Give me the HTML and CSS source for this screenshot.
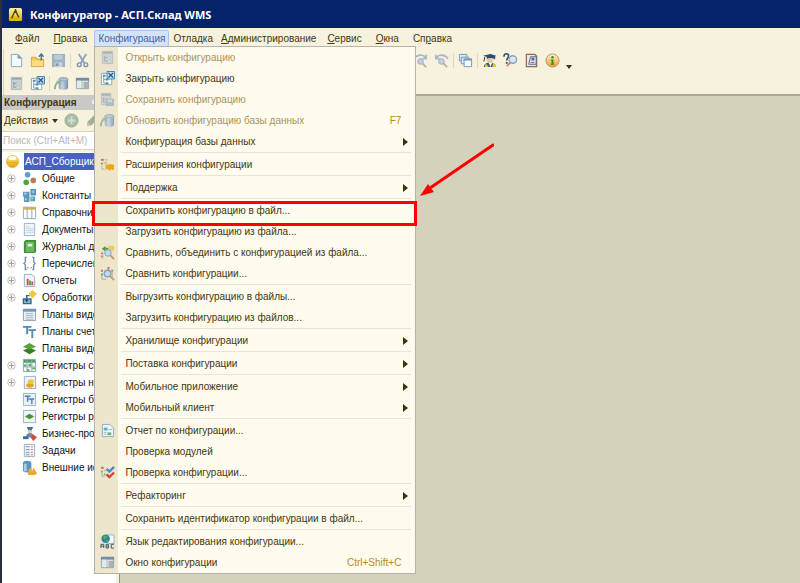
FILE: index.html
```html
<!DOCTYPE html>
<html lang="ru">
<head>
  <meta charset="UTF-8">
  <meta name="viewport" content="width=device-width, initial-scale=1.0">
  <title>Конфигуратор - АСП.Склад WMS</title>
  <link rel="stylesheet" href="styles.css">
</head>
<body>
  <!-- значки -->
  <svg class="sprite" aria-hidden="true">
    <defs>
      <linearGradient id="gYellow" x1="0" y1="0" x2="0" y2="1"><stop offset="0" stop-color="#fdf3a0"/><stop offset="1" stop-color="#e0b400"/></linearGradient>
      <linearGradient id="gBall" x1="0" y1="0" x2="0" y2="1"><stop offset="0" stop-color="#fff6d0"/><stop offset=".5" stop-color="#f5c842"/><stop offset="1" stop-color="#e0a010"/></linearGradient>
      <linearGradient id="gInfo" x1="0" y1="0" x2="0" y2="1"><stop offset="0" stop-color="#fff0c8"/><stop offset="1" stop-color="#f0a030"/></linearGradient>
      <linearGradient id="gDb"><stop offset="0" stop-color="#8fa9c0"/><stop offset=".4" stop-color="#c3d3e0"/><stop offset="1" stop-color="#7590ab"/></linearGradient>
    </defs>
    <symbol id="i-app" viewBox="0 0 16 16"><rect x="1" y="1" width="14" height="14" rx="2" fill="url(#gYellow)"/><path d="M1 11l5-1 5 1 4-1v4H1z" fill="#c9c400"/><path d="M8 2v4M7 5l-3 7M8.500 5l3 6" stroke="#4a4420" stroke-width="1.500" fill="none"/><circle cx="8" cy="5" r="1.500" fill="#4a4420"/></symbol>
    <symbol id="i-new" viewBox="0 0 16 16"><path d="M2.500 1.500h7l4 4v9h-11z" fill="#f4f9fd" stroke="#8aa6bf"/><path d="M9.500 1.500v4h4z" fill="#7f9fbc" stroke="#8aa6bf"/></symbol>
    <symbol id="i-open" viewBox="0 0 16 16"><path d="M1.500 4.500h5l1 2h7v8h-13z" fill="#f6c955" stroke="#d9a03a"/><path d="M2 8h12v6H2z" fill="#fbdc80"/><path d="M12 8V2M9.500 4L12 1l2.500 3" stroke="#4a7590" stroke-width="1.500" fill="none"/></symbol>
    <symbol id="i-save" viewBox="0 0 16 16"><path d="M1 1h14v14H1z" fill="#9db3c6"/><path d="M3.500 2h9v5h-9z" fill="#bccbd7"/><path d="M4 10h8v5H4z" fill="#c9d3d9"/><path d="M5 11h3v3H5z" fill="#8299ad"/></symbol>
    <symbol id="i-cut" viewBox="0 0 16 16"><path d="M4 1l6 10M12 1L6 11" stroke="#91a3b8" stroke-width="2" fill="none"/><circle cx="4.500" cy="12.500" r="2" fill="none" stroke="#7f95ae" stroke-width="1.500"/><circle cx="11.500" cy="12.500" r="2" fill="none" stroke="#7f95ae" stroke-width="1.500"/></symbol>
    <symbol id="i-tree-off" viewBox="0 0 16 16"><path d="M2.500 1.500h11v13h-11z" fill="#c9d0d0" stroke="#adb8bd"/><path d="M3 2h10v2H3z" fill="#98a8b5"/><path d="M5 6v6h3M5 8h3" stroke="#8b9dad" fill="none"/><path d="M8 7h3v2H8zM8 11h3v2H8z" fill="#e8eaea" stroke="#a0adb7" stroke-width=".5"/></symbol>
    <symbol id="i-tree-x" viewBox="0 0 16 16"><path d="M1.500 2.500h11v12h-11z" fill="#fff" stroke="#8fa5b5"/><path d="M3 4h3v2H3zM6 8h3v2H6zM6 12h3v2H6z" fill="#5a8fb5"/><path d="M4 6v7h2M4 9h2" stroke="#7a9ab0" fill="none"/><path d="M7.500.500h8v8h-8z" fill="#c5dff0" stroke="#3f7ea8"/><path d="M9 2l5 5M14 2L9 7" stroke="#225f8d" stroke-width="1.500"/></symbol>
    <symbol id="i-tree-save" viewBox="0 0 16 16"><path d="M1.500 1.500h10v12h-10z" fill="#c9d0d0" stroke="#adb8bd"/><path d="M2 2h9v2H2z" fill="#98a8b5"/><path d="M3.500 6v5H6M3.500 7.500H6" stroke="#8b9dad" fill="none"/><path d="M6 7h9v8H6z" fill="#9fb1c2"/><path d="M8 8h5v3H8z" fill="#c7d1da"/></symbol>
    <symbol id="i-db" viewBox="0 0 16 16"><path d="M5 3.500C5 1 15 1 15 3.500v9c0 3-10 3-10 0z" fill="url(#gDb)"/><ellipse cx="10" cy="3.500" rx="5" ry="2" fill="#a9bfd0" stroke="#849db5" stroke-width=".7"/><path d="M1 14c0-4 1-6 3-7" stroke="#93b093" stroke-width="2" fill="none"/><path d="M2 5h5v5z" fill="#93b093"/></symbol>
    <symbol id="i-window" viewBox="0 0 16 16"><path d="M1.500 2.500h13v11h-13z" fill="#f5f5f0" stroke="#8d9da8"/><path d="M1 2h14v3H1z" fill="#6f8fa8"/><path d="M2 5h4v8H2z" fill="#dfe8ee"/><path d="M9 6h5v7H9z" fill="#a9b3b6"/><path d="M7.500 5v8" stroke="#9aa"/></symbol>
    <symbol id="i-find" viewBox="0 0 16 16"><path d="M1 6c3-4 8-5 12-2" stroke="#a9b9c5" stroke-width="2" fill="none"/><path d="M15 1v6H9z" fill="#a9b9c5"/><circle cx="8" cy="9" r="3" fill="#c5cfe3" stroke="#9aa7c0"/><path d="M10 11l4 4" stroke="#c9ab9c" stroke-width="2"/></symbol>
    <symbol id="i-find-prev" viewBox="0 0 16 16"><path d="M15 6C12 2 7 1 3 4" stroke="#a9b9c5" stroke-width="2" fill="none"/><path d="M1 1v6h6z" fill="#a9b9c5"/><circle cx="8" cy="9" r="3" fill="#c5cfe3" stroke="#9aa7c0"/><path d="M10 11l4 4" stroke="#c9ab9c" stroke-width="2"/></symbol>
    <symbol id="i-windows" viewBox="0 0 16 16"><path d="M1.500 1.500h8v7h-8z" fill="#dbe8f0" stroke="#6f9ab8"/><path d="M3.500 4.500h8v7h-8z" fill="#dbe8f0" stroke="#6f9ab8"/><path d="M6.500 6.500h8v8h-8z" fill="#f3f9fc" stroke="#6f9ab8"/><path d="M6 6h9v2H6z" fill="#6f9ab8"/></symbol>
    <symbol id="i-grad" viewBox="0 0 16 16"><path d="M2 15c0-4 4-5 6-5s7 1 7 5z" fill="#365b78"/><path d="M4 11l3 4h-4zM12 11l3 2v2h-4z" fill="#f0c53a"/><path d="M7 10h4l-2 5z" fill="#fff"/><circle cx="8.500" cy="7" r="3.500" fill="#f2c79a"/><path d="M1 3l8-2 6 2-1 1v3c-3-2-6-2-9-1V4z" fill="#264f74"/><path d="M3 4L2 9" stroke="#333"/></symbol>
    <symbol id="i-helpfind" viewBox="0 0 16 16"><path d="M1 4c0-4 5-4 5-1 0 2-2 2-2 5M3 10.500h2" stroke="#2e5878" stroke-width="1.700" fill="none"/><circle cx="10.500" cy="7" r="4" fill="#d7e7f5" stroke="#8ba5bd" stroke-width="1.500"/><path d="M8 10l-4 4" stroke="#c58b66" stroke-width="2"/></symbol>
    <symbol id="i-book" viewBox="0 0 16 16"><path d="M2.500 1.500h9l2 2v11h-11z" fill="#f2e6d8" stroke="#966850" stroke-width="1.300"/><path d="M7 4h6v8H5z" fill="#dce9f5" stroke="#4b6d94"/><path d="M8 5h3v3H8z" fill="#496ea5"/><path d="M7 10h4" stroke="#b84c4c"/></symbol>
    <symbol id="i-info" viewBox="0 0 16 16"><circle cx="8" cy="8" r="7" fill="url(#gInfo)" stroke="#bd9565"/><circle cx="8" cy="4.500" r="1.300" fill="#3b8a20"/><path d="M6 7h3v4.500h1v1H6v-1h1V8H6z" fill="#3b8a20"/></symbol>
    <symbol id="i-add" viewBox="0 0 16 16"><circle cx="8" cy="8" r="7" fill="#a9bfa5" stroke="#97ad94"/><path d="M8 4v8M4 8h8" stroke="#d4e0cf" stroke-width="2"/></symbol>
    <symbol id="i-pencil" viewBox="0 0 16 16"><path d="M2 14l1-5 8-8 4 4-8 8z" fill="#a0b093"/><path d="M2 14l1-4 3 3z" fill="#c8c4a8"/></symbol>
    <symbol id="i-ball" viewBox="0 0 16 16"><circle cx="8" cy="8" r="6.500" fill="url(#gBall)" stroke="#d9a52b" stroke-width=".7"/><path d="M2 9h12" stroke="#d99c20" stroke-width=".7"/><ellipse cx="8" cy="4.500" rx="4" ry="2" fill="#fffbe8"/></symbol>
    <symbol id="i-common" viewBox="0 0 16 16"><circle cx="6" cy="4" r="3" fill="#5a9fc8"/><circle cx="4.500" cy="12" r="3" fill="#4ca83b"/><circle cx="12" cy="10" r="3" fill="#c07a5e"/></symbol>
    <symbol id="i-const" viewBox="0 0 16 16"><path d="M1 4h7v5H1zM9 1h6v7H9zM2 9h6v6H2zM9 9h5v5H9z" fill="#5b97bf"/><path d="M2 5h3v2H2zM11 3h2v2h-2zM3 11h2v2H3zM10 10h2v2h-2z" fill="#abd0e6"/></symbol>
    <symbol id="i-catalog" viewBox="0 0 16 16"><path d="M1.500 2.500h13v12h-13z" fill="#fbfdff" stroke="#98aab8"/><path d="M1 2h14v3H1z" fill="#d9b353"/><path d="M5.500 2v13M10.500 2v13" stroke="#8fa6b7"/></symbol>
    <symbol id="i-doc" viewBox="0 0 16 16"><path d="M2.500 1.500h11v13h-11z" fill="#eff6fb" stroke="#9cb0c2"/><path d="M4 5h4M4 7h8M4 9h8M4 11h8" stroke="#c0d2e0"/></symbol>
    <symbol id="i-journal" viewBox="0 0 16 16"><path d="M2 3l2-2h11v13l-2 1H2z" fill="#3f8f3b"/><path d="M4 3h9v11H4z" fill="#70b761"/><path d="M6 5h5v3H6z" fill="#d9efcf"/></symbol>
    <symbol id="i-enum" viewBox="0 0 16 16"><path d="M5 1.500H3.500v5L2 8l1.500 1.500v5H5M11 1.500h1.500v5L14 8l-1.500 1.500v5H11" fill="none" stroke="#6c879d" stroke-width="1.300"/><path d="M5 12h2v1H5zM9 12h2v1H9z" fill="#6c879d"/></symbol>
    <symbol id="i-report" viewBox="0 0 16 16"><path d="M2.500 1.500h8l3 3v10h-11z" fill="#edf5fa" stroke="#96aec2"/><path d="M5 6h2v7H5zM10 9h2v4h-2z" fill="#d0504c"/><path d="M7.500 8h2v5h-2z" fill="#4da04a"/></symbol>
    <symbol id="i-process" viewBox="0 0 16 16"><path d="M11 0l5 4-5 5-4-5z" fill="#f5c53c"/><path d="M1.500 9.500h8v5h-8z" fill="#8cb2d0" stroke="#36648b" stroke-width="1.500"/><path d="M5 12V6h3" stroke="#36648b" stroke-width="1.500" fill="none"/><path d="M3 10h4l-2 3z" fill="#1e4768"/></symbol>
    <symbol id="i-table" viewBox="0 0 16 16"><path d="M1.500 2.500h13v12h-13z" fill="#e9f1f5" stroke="#8b9dab"/><path d="M1 2h14v3H1z" fill="#7696b0"/><path d="M4 7h8M4 9h8M4 11h8M4 13h8" stroke="#a8bac7"/></symbol>
    <symbol id="i-tt" viewBox="0 0 16 16"><path d="M1 3h9M5.500 3v8M7 6.500h8M11 6v9" stroke="#5488b0" stroke-width="2" fill="none"/></symbol>
    <symbol id="i-layers" viewBox="0 0 16 16"><path d="M8 7l7 3-7 4-7-4z" fill="#3a7f28"/><path d="M8 2l7 4-7 3-7-3z" fill="#56a53b"/></symbol>
    <symbol id="i-regsv" viewBox="0 0 16 16"><path d="M1.500 1.500h13v13h-13z" fill="#eff5f2" stroke="#8ba2ac"/><path d="M2 2h12v3H2z" fill="#4c9e63"/><path d="M2 7h3v2H2zM7 6h3v3H7zM11 10h3v2h-3zM5 12h3v2H5z" fill="#5da869"/><path d="M5.500 2v12M10.500 2v12M2 9.500h12" stroke="#99aeb5"/></symbol>
    <symbol id="i-regacc" viewBox="0 0 16 16"><path d="M2.500 1.500h12v13h-12z" fill="#edf4f8" stroke="#96aec2"/><ellipse cx="8.500" cy="11" rx="4" ry="2.500" fill="#e2a51e"/><ellipse cx="9.500" cy="7" rx="3.500" ry="2.500" fill="#f3c64b"/></symbol>
    <symbol id="i-regtt" viewBox="0 0 16 16"><path d="M1.500 1.500h13v13h-13z" fill="#e8f1f6" stroke="#96aec2"/><path d="M3 4.500h6M6 4.500v6M7 7.500h6M10.500 7v6" stroke="#4a80aa" stroke-width="1.500"/></symbol>
    <symbol id="i-regcalc" viewBox="0 0 16 16"><path d="M1.500 1.500h13v13h-13z" fill="#eff5f7" stroke="#96aec2"/><path d="M8 5l5 3-5 3-5-3z" fill="#4a9138"/></symbol>
    <symbol id="i-bp" viewBox="0 0 16 16"><path d="M5 1h7l-2 4H7z" fill="#39759f"/><circle cx="8.500" cy="6" r="2" fill="#edc59f"/><path d="M4 12c0-6 9-6 9 0z" fill="#6a8ead"/><path d="M1 11h6v3H1z" fill="#376e98"/><path d="M12 9l4 3-4 4-3-4z" fill="#db4a36"/></symbol>
    <symbol id="i-task" viewBox="0 0 16 16"><path d="M2.500 1.500h11v13h-11z" fill="#f0f4f7" stroke="#9cafbf"/><path d="M4 4h4M4 7h4M4 10h4M4 12.500h4" stroke="#708ea8"/><path d="M9.500 4h2M9.500 7h2M9.500 10h2M9.500 12.500h2" stroke="#d16f6b"/></symbol>
    <symbol id="i-ext" viewBox="0 0 16 16"><path d="M1 3c0-3 9-3 9 0v8c0 3-9 3-9 0z" fill="#5b95bf"/><path d="M2 4h3v8H2z" fill="#a8cde5"/><path d="M6 14l3-4 2 2 1-4 4 6-2 2H7z" fill="#e6a92a"/><circle cx="9" cy="11" r="2" fill="#e9b43e"/></symbol>
    <symbol id="i-extension" viewBox="0 0 16 16"><path d="M1 2h3v2H1z" fill="#d6625a"/><path d="M1 6h2v2H1z" fill="#63a95c"/><path d="M2 9v4h3M5 3h3M4 7h3" stroke="#b0b49f" fill="none"/><path d="M4 5h4v2H4z" fill="#e2c59b"/><path d="M6 8h4l1-1 1 1h3v5l-2 1-1-1-2 2-1-2H6z" fill="#eda71c"/></symbol>
    <symbol id="i-merge" viewBox="0 0 16 16"><path d="M2 4l4-3v6z" fill="#419a35"/><path d="M6 3h3v2H6z" fill="#419a35"/><path d="M9 1h6v5H9z" fill="#f2c95d"/><path d="M1 7h3v8H1z" fill="#e5c9b0"/><path d="M1 9h2M1 12h2" stroke="#c75b4c"/><circle cx="8.500" cy="8.500" r="3.500" fill="#c0dbef" stroke="#7fa3c1"/><path d="M11 11l4 4" stroke="#c79772" stroke-width="2"/></symbol>
    <symbol id="i-compare" viewBox="0 0 16 16"><path d="M1 4h2v2H1zM8 1h2v3H8z" fill="#d3645a"/><path d="M1 8h2v2H1zM12 4h2v2h-2z" fill="#6ba863"/><path d="M2 10v4h5M13 6v6" stroke="#a8aaa0" fill="none"/><circle cx="8" cy="8" r="3.500" fill="#c0dbef" stroke="#7fa3c1" stroke-width="1.500"/><path d="M10.500 10.500L15 15" stroke="#c79772" stroke-width="2"/></symbol>
    <symbol id="i-repconf" viewBox="0 0 16 16"><path d="M2.500 1.500h8l4 4v9h-12z" fill="#eef6fb" stroke="#8fabc2"/><path d="M4 5h4v3H4z" fill="#66a8c7"/><path d="M8 10h4v3H8z" fill="#6bb072"/><path d="M9 7h4M4 10h3M4 12h3" stroke="#9ab3c7"/></symbol>
    <symbol id="i-check" viewBox="0 0 16 16"><path d="M1 2h3v2H1z" fill="#d6625a"/><path d="M1 6h2v2H1zM4 9h2v2H4z" fill="#74b26b"/><path d="M2 8v4h3M4 6h3" stroke="#b0a88f" fill="none"/><path d="M7 4l3 3 5-5" stroke="#4e8bb9" stroke-width="2.500" fill="none"/><path d="M7 10l3 3 5-5" stroke="#d1453a" stroke-width="2.500" fill="none"/></symbol>
    <symbol id="i-lang" viewBox="0 0 16 16"><path d="M8 1h7v9H8z" fill="#f4f9fc" stroke="#9db4c6"/><circle cx="6" cy="5" r="4.500" fill="#2885a5"/><path d="M3 3l3-2 2 2-3 3zM6 7l3-1-1 3z" fill="#52b050"/><path d="M1 15v-4h3v4M1 13h3M6.500 11v4H9v-4zM6.500 13H9M15 11h-3v4h3" stroke="#31566e" fill="none"/></symbol>
    <symbol id="i-plus" viewBox="0 0 9 9"><circle cx="4.500" cy="4.500" r="3.800" fill="#f5f5f5" stroke="#b8b8b8" stroke-width=".8"/><path d="M4.500 2v5M2 4.500h5" stroke="#a0a0a0"/></symbol>
    <symbol id="i-right" viewBox="0 0 6 10"><path d="M1 1l5 4-5 4z" fill="#3f3208"/></symbol>
    <symbol id="i-down" viewBox="0 0 6 4"><path d="M0 0h6L3 4z" fill="#3f3208"/></symbol>
    <symbol id="i-pin" viewBox="0 0 8 8"><path d="M2 1h4v3H2zM1 4h6M4 4v4" fill="none" stroke="#fff"/></symbol>
  </svg>

  <div class="app">
    <header class="titlebar">
      <svg class="icon"><use href="#i-app"/></svg>
      <h1>Конфигуратор - АСП.Склад WMS</h1>
    </header>

    <nav class="menubar">
      <button><u>Ф</u>айл</button>
      <button><u>П</u>равка</button>
      <div class="dropdown">
        <button class="tight active">Конфигурация</button>
        <div class="menu">
          <button class="item" disabled><svg class="icon"><use href="#i-tree-off"/></svg><span>Открыть конфигурацию</span></button>
          <button class="item"><svg class="icon"><use href="#i-tree-x"/></svg><span>Закрыть конфигурацию</span></button>
          <button class="item" disabled><svg class="icon"><use href="#i-tree-save"/></svg><span>Сохранить конфигурацию</span></button>
          <button class="item" disabled><svg class="icon"><use href="#i-db"/></svg><span>Обновить конфигурацию базы данных</span><kbd>F7</kbd></button>
          <button class="item"><span>Конфигурация базы данных</span><svg class="more"><use href="#i-right"/></svg></button>
          <hr>
          <button class="item"><svg class="icon"><use href="#i-extension"/></svg><span>Расширения конфигурации</span></button>
          <hr>
          <button class="item"><span>Поддержка</span><svg class="more"><use href="#i-right"/></svg></button>
          <hr>
          <button class="item marked"><span>Сохранить конфигурацию в файл...</span></button>
          <button class="item"><span>Загрузить конфигурацию из файла...</span></button>
          <button class="item"><svg class="icon"><use href="#i-merge"/></svg><span>Сравнить, объединить с конфигурацией из файла...</span></button>
          <button class="item"><svg class="icon"><use href="#i-compare"/></svg><span>Сравнить конфигурации...</span></button>
          <hr>
          <button class="item"><span>Выгрузить конфигурацию в файлы...</span></button>
          <button class="item"><span>Загрузить конфигурацию из файлов...</span></button>
          <hr>
          <button class="item"><span>Хранилище конфигурации</span><svg class="more"><use href="#i-right"/></svg></button>
          <hr>
          <button class="item"><span>Поставка конфигурации</span><svg class="more"><use href="#i-right"/></svg></button>
          <hr>
          <button class="item"><span>Мобильное приложение</span><svg class="more"><use href="#i-right"/></svg></button>
          <button class="item"><span>Мобильный клиент</span><svg class="more"><use href="#i-right"/></svg></button>
          <hr>
          <button class="item"><svg class="icon"><use href="#i-repconf"/></svg><span>Отчет по конфигурации...</span></button>
          <button class="item"><span>Проверка модулей</span></button>
          <button class="item"><svg class="icon"><use href="#i-check"/></svg><span>Проверка конфигурации...</span></button>
          <hr>
          <button class="item"><span>Рефакторинг</span><svg class="more"><use href="#i-right"/></svg></button>
          <hr>
          <button class="item"><span>Сохранить идентификатор конфигурации в файл...</span></button>
          <hr>
          <button class="item"><svg class="icon"><use href="#i-lang"/></svg><span>Язык редактирования конфигурации...</span></button>
          <button class="item"><svg class="icon"><use href="#i-window"/></svg><span>Окно конфигурации</span><kbd>Ctrl+Shift+C</kbd></button>
        </div>
      </div>
      <button class="tight">Отладка</button>
      <button class="tight"><u>А</u>дминистрирование</button>
      <button><u>С</u>ервис</button>
      <button><u>О</u>кна</button>
      <button>Сп<u>р</u>авка</button>
    </nav>

    <div class="toolbars">
      <div class="toolbar">
        <button aria-label="Новый"><svg class="icon"><use href="#i-new"/></svg></button>
        <button aria-label="Открыть"><svg class="icon"><use href="#i-open"/></svg></button>
        <button aria-label="Сохранить"><svg class="icon"><use href="#i-save"/></svg></button>
        <i class="sep"></i>
        <button aria-label="Вырезать"><svg class="icon"><use href="#i-cut"/></svg></button>
        <div class="tools-right">
          <button aria-label="Найти далее"><svg class="icon"><use href="#i-find"/></svg></button>
          <button aria-label="Найти назад"><svg class="icon"><use href="#i-find-prev"/></svg></button>
          <i class="sep"></i>
          <button aria-label="Окна"><svg class="icon"><use href="#i-windows"/></svg></button>
          <i class="sep"></i>
          <button aria-label="Синтакс-помощник"><svg class="icon"><use href="#i-grad"/></svg></button>
          <button aria-label="Поиск в справке"><svg class="icon"><use href="#i-helpfind"/></svg></button>
          <button aria-label="Справка"><svg class="icon"><use href="#i-book"/></svg></button>
          <button aria-label="О программе"><svg class="icon"><use href="#i-info"/></svg></button>
          <button class="overflow" aria-label="Ещё"><svg class="down"><use href="#i-down"/></svg></button>
        </div>
      </div>
      <div class="toolbar">
        <button aria-label="Открыть конфигурацию"><svg class="icon"><use href="#i-tree-off"/></svg></button>
        <button aria-label="Закрыть конфигурацию"><svg class="icon"><use href="#i-tree-x"/></svg></button>
        <i class="sep"></i>
        <button aria-label="Обновить"><svg class="icon"><use href="#i-db"/></svg></button>
        <button aria-label="Окно конфигурации"><svg class="icon"><use href="#i-window"/></svg></button>
      </div>
    </div>

    <div class="main">
      <aside class="panel">
        <h2>Конфигурация <svg class="pin"><use href="#i-pin"/></svg></h2>
        <div class="actions">
          <button>Действия <svg class="down"><use href="#i-down"/></svg></button>
          <button aria-label="Добавить"><svg class="icon"><use href="#i-add"/></svg></button>
          <button aria-label="Изменить"><svg class="icon"><use href="#i-pencil"/></svg></button>
        </div>
        <input class="search" type="text" placeholder="Поиск (Ctrl+Alt+M)" aria-label="Поиск">
        <ul class="tree">
          <li class="root"><svg class="icon"><use href="#i-ball"/></svg><span>АСП_СборщикТ</span></li>
          <li><svg class="plus"><use href="#i-plus"/></svg><svg class="icon"><use href="#i-common"/></svg><span>Общие</span></li>
          <li><svg class="plus"><use href="#i-plus"/></svg><svg class="icon"><use href="#i-const"/></svg><span>Константы</span></li>
          <li><svg class="plus"><use href="#i-plus"/></svg><svg class="icon"><use href="#i-catalog"/></svg><span>Справочники</span></li>
          <li><svg class="plus"><use href="#i-plus"/></svg><svg class="icon"><use href="#i-doc"/></svg><span>Документы</span></li>
          <li><svg class="plus"><use href="#i-plus"/></svg><svg class="icon"><use href="#i-journal"/></svg><span>Журналы документов</span></li>
          <li><svg class="plus"><use href="#i-plus"/></svg><svg class="icon"><use href="#i-enum"/></svg><span>Перечисления</span></li>
          <li><svg class="plus"><use href="#i-plus"/></svg><svg class="icon"><use href="#i-report"/></svg><span>Отчеты</span></li>
          <li><svg class="plus"><use href="#i-plus"/></svg><svg class="icon"><use href="#i-process"/></svg><span>Обработки</span></li>
          <li class="leaf"><svg class="icon"><use href="#i-table"/></svg><span>Планы видов характеристик</span></li>
          <li class="leaf"><svg class="icon"><use href="#i-tt"/></svg><span>Планы счетов</span></li>
          <li class="leaf"><svg class="icon"><use href="#i-layers"/></svg><span>Планы видов расчета</span></li>
          <li><svg class="plus"><use href="#i-plus"/></svg><svg class="icon"><use href="#i-regsv"/></svg><span>Регистры сведений</span></li>
          <li><svg class="plus"><use href="#i-plus"/></svg><svg class="icon"><use href="#i-regacc"/></svg><span>Регистры накопления</span></li>
          <li class="leaf"><svg class="icon"><use href="#i-regtt"/></svg><span>Регистры бухгалтерии</span></li>
          <li class="leaf"><svg class="icon"><use href="#i-regcalc"/></svg><span>Регистры расчета</span></li>
          <li class="leaf"><svg class="icon"><use href="#i-bp"/></svg><span>Бизнес-процессы</span></li>
          <li class="leaf"><svg class="icon"><use href="#i-task"/></svg><span>Задачи</span></li>
          <li class="leaf"><svg class="icon"><use href="#i-ext"/></svg><span>Внешние источники данных</span></li>
        </ul>
      </aside>
      <main class="workspace"></main>
    </div>

    <!-- стрелка к пункту меню -->
    <svg class="arrow" viewBox="0 0 76 54" aria-hidden="true">
      <path d="M75 2L12 45" stroke="#fe0000" stroke-width="3" stroke-linecap="round"/>
      <path d="M2 53L10 41l6 8z" fill="#fe0000"/>
    </svg>
  </div>
</body>
</html>
```
FILE: styles.css
```css
* {
  box-sizing: border-box;
}
body {
  margin: 0;
  font-family: "Liberation Sans", Arial, sans-serif;
  font-size: 10px;
  color: #43370c;
  background: #f7f2dd;
}
button {
  margin: 0;
  padding: 0;
  border: none;
  background: none;
  font: inherit;
  color: inherit;
  text-align: left;
  white-space: nowrap;
}
.sprite {
  position: absolute;
  width: 0;
  height: 0;
}
.icon {
  width: 15px;
  height: 15px;
  flex: none;
}
.app {
  position: relative;
  display: flex;
  flex-direction: column;
  min-height: 100vh;
  overflow: hidden;
  border-left: 2px solid #2c303c;
}

/* заголовок окна */
.titlebar {
  display: flex;
  align-items: center;
  gap: 7px;
  height: 28px;
  margin-left: -2px;
  padding-left: 8px;
  background: #06226a;
  color: #fff;
}
.titlebar h1 {
  margin: 0;
  font-family: "Noto Sans", "Open Sans", sans-serif;
  font-size: 11px;
  font-weight: bold;
}

/* главное меню */
.menubar {
  display: flex;
  height: 20px;
  padding: 2px 0 0 6px;
}
.menubar > button,
.dropdown > button {
  height: 17px;
  padding: 0 6px;
  border: 1px solid transparent;
}
.menubar > .tight,
.dropdown > .tight {
  padding: 0 3px;
}
.dropdown {
  position: relative;
}
.dropdown > .active {
  border-color: #a9c3ee;
  border-radius: 2px;
  background: #d3e3fc;
  color: #4a5f9f;
}
.menu {
  position: absolute;
  z-index: 2;
  top: 16px;
  left: 0;
  width: 322px;
  border: 1px solid #b5b4ac;
  background: linear-gradient(to right, #ede6cd 23px, #fffbee 23px);
}
.item {
  position: relative;
  display: flex;
  align-items: center;
  width: 100%;
  height: 21px;
  padding: 0 7px 0 30px;
}
.item .icon {
  margin: 0 10px 0 -25px;
}
.item:disabled {
  color: #a8935c;
}
.item:disabled .icon {
  opacity: 0.8;
}
.item kbd {
  margin-left: auto;
  padding-right: 7px;
  font: inherit;
  color: #b88c1c;
}
.item .more {
  width: 6px;
  height: 10px;
  margin-left: auto;
}
.menu hr {
  height: 2px;
  margin: 0 4px 0 26px;
  border: none;
  border-top: 1px solid #e9e5d8;
}
.marked::after {
  content: "";
  position: absolute;
  inset: 1px -2px -5px -3px;
  z-index: 1;
  border: 3px solid #fe0000;
}

/* панели инструментов */
.toolbars {
  padding-top: 1px;
  height: 46px;
}
.toolbar {
  display: flex;
  align-items: center;
  gap: 6px;
  height: 23px;
  margin-left: 1px;
  padding-left: 5px;
  border-left: 1px solid #dcd6be;
}
.toolbar button {
  display: flex;
}
.sep {
  width: 1px;
  height: 15px;
  margin: 0 -2px;
  background: #dcd7c4;
}
.tools-right {
  display: flex;
  align-items: center;
  gap: 6px;
  margin-left: 317px;
}
.down {
  width: 6px;
  height: 4px;
}
.toolbar .overflow {
  padding-top: 12px;
}

.main {
  display: flex;
  flex: 1;
}
.panel {
  flex: none;
  width: 117px;
  display: flex;
  flex-direction: column;
  overflow: hidden;
  padding: 1px 3px 0 0;
}
.panel h2 {
  display: flex;
  align-items: center;
  justify-content: space-between;
  height: 15px;
  margin: 0;
  padding: 0 17px 0 2px;
  background: #cbc9c6;
  font-size: 10px;
}
.pin {
  width: 8px;
  height: 8px;
}
.actions {
  display: flex;
  align-items: center;
  gap: 6px;
  height: 21px;
  padding-left: 2px;
}
.actions button {
  display: flex;
  align-items: center;
  gap: 4px;
}
.search {
  width: 100%;
  height: 19px;
  padding: 0 1px;
  border: 1px solid #d8d4c2;
  border-width: 1px 0;
  background: #fff;
  font: inherit;
}
.search::placeholder {
  color: #b9b9b9;
}
.tree {
  flex: 1;
  margin: 2px 0 0;
  padding: 0;
  list-style: none;
  background: #fff;
  color: #111;
}
.tree li {
  display: flex;
  align-items: center;
  height: 17px;
  padding-left: 5px;
  white-space: nowrap;
}
.tree .plus {
  flex: none;
  width: 9px;
  height: 9px;
  margin-right: 6px;
}
.tree li span {
  overflow: hidden;
  padding-left: 5px;
}
.tree .leaf {
  padding-left: 20px;
}
.tree .root {
  height: 18px;
  padding-left: 3px;
}
.tree .root span {
  flex: 1;
  margin-left: 4px;
  padding-left: 1px;
  background: #4a60c0;
  color: #fff;
  line-height: 17px;
}
.workspace {
  flex: 1;
  border-top: 2px solid #a8a79c;
  border-left: 1px solid #8f8e84;
  background: #d5d2bb;
}

.arrow {
  position: absolute;
  z-index: 3;
  top: 143px;
  left: 416px;
  width: 76px;
  height: 54px;
  fill: none;
}
```
